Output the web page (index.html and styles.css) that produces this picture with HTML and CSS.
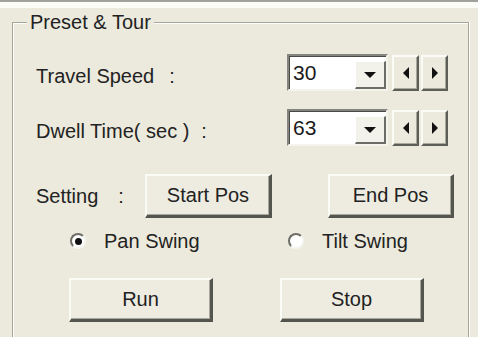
FILE: index.html
```html
<!DOCTYPE html>
<html>
<head>
<meta charset="utf-8">
<link rel="stylesheet" href="styles.css">
</head>
<body>
<div class="topbar"></div>
<fieldset class="group">
  <legend class="title">Preset &amp; Tour</legend>
  <div class="row r1">
    <span class="label lab-wide lab-shift">Travel Speed<span class="colon c1">:</span></span>
    <div class="combo"><span class="val">30</span><span class="drop"><i class="tri-down"></i></span></div>
    <span class="spin sp-l"><i class="tri-left"></i></span>
    <span class="spin"><i class="tri-right"></i></span>
  </div>
  <div class="row r2">
    <span class="label lab-wide lab-shift">Dwell Time( sec )<span class="colon c2">:</span></span>
    <div class="combo"><span class="val">63</span><span class="drop"><i class="tri-down"></i></span></div>
    <span class="spin sp-l"><i class="tri-left"></i></span>
    <span class="spin"><i class="tri-right"></i></span>
  </div>
  <div class="row r3">
    <span class="label lab-set">Setting<span class="colon c3">:</span></span>
    <span class="btn b-start">Start Pos</span>
    <span class="btn b-end">End Pos</span>
  </div>
  <div class="row r4">
    <span class="radio r-pan"><span class="circle on"></span><span class="rtext">Pan Swing</span></span>
    <span class="radio"><span class="circle"></span><span class="rtext">Tilt Swing</span></span>
  </div>
  <div class="row r5">
    <span class="btn b-run">Run</span>
    <span class="btn b-stop">Stop</span>
  </div>
</fieldset>
</body>
</html>
```

FILE: styles.css
```css
html, body {
  margin: 0;
  padding: 0;
  width: 478px;
  height: 337px;
  overflow: hidden;
  background: #ECEADD;
  font-family: "Liberation Sans", Arial, sans-serif;
  font-size: 20px;
  color: #222;
}

.topbar {
  height: 6px;
  border-top: 2px solid #a2a29c;
  background: #fbfbf8;
}

.group {
  box-sizing: border-box;
  margin: 3px 0 0 12px;
  padding: 0 0 0 14px;
  width: 457px;
  height: 326px;
  min-inline-size: 0;
  border: 1px solid #a6a59a;
  border-bottom-width: 0;
  box-shadow: inset 1px 1px #fdfdfa, 1px 0 #fdfdfa;
}

.title {
  padding: 0 3px;
  line-height: 22px;
  background: #ECEADD;
}

.row {
  display: flex;
  align-items: center;
  padding-left: 9px;
}

.r1 { margin-top: 21px; height: 37px; }
.r2 { margin-top: 18px; height: 37px; }
.r3 { margin-top: 28px; height: 44px; }
.r4 { margin-top: 5px; height: 36px; }
.r5 { margin-top: 19px; height: 44px; }

.label {
  line-height: 22px;
  white-space: nowrap;
}
.lab-wide { width: 251px; }
.lab-shift { padding-top: 6px; }
.lab-set { width: 109px; }

.colon { margin-left: 15px; }
.c2 { margin-left: 12px; }
.c3 { margin-left: 20px; }

.combo {
  box-sizing: border-box;
  width: 101px;
  height: 37px;
  display: flex;
  align-items: stretch;
  background: #fff;
  border: 2px solid;
  border-color: #858580 #f4f3ec #f4f3ec #858580;
  box-shadow: inset 1px 1px #4a4a46;
}

.val {
  flex: 1;
  padding: 0 0 0 4px;
  line-height: 33px;
  font-size: 21px;
  color: #1a1a1a;
}

.drop {
  box-sizing: border-box;
  width: 31px;
  margin: 5px 0 0 0;
  display: flex;
  align-items: center;
  justify-content: center;
  background: #f3f2ea;
  border-top: 1px solid #fff;
  border-left: 1px solid #fff;
  border-right: 2px solid #6c6c66;
  border-bottom: 2px solid #6c6c66;
}

.tri-down {
  width: 0;
  height: 0;
  border-left: 6px solid transparent;
  border-right: 6px solid transparent;
  border-top: 6px solid #111;
}

.spin {
  box-sizing: border-box;
  width: 27px;
  height: 36px;
  display: flex;
  align-items: center;
  justify-content: center;
  background: #ECEADD;
  border-top: 2px solid #fbfbf6;
  border-left: 2px solid #fbfbf6;
  border-right: 2px solid #5e5e58;
  border-bottom: 2px solid #5e5e58;
  box-shadow: inset -1px -1px #a9a89d;
}
.sp-l { margin: 0 2px 0 4px; }

.tri-left {
  width: 0;
  height: 0;
  border-top: 6px solid transparent;
  border-bottom: 6px solid transparent;
  border-right: 6px solid #111;
}
.tri-right {
  width: 0;
  height: 0;
  border-top: 6px solid transparent;
  border-bottom: 6px solid transparent;
  border-left: 6px solid #111;
}

.btn {
  box-sizing: border-box;
  height: 44px;
  display: flex;
  align-items: center;
  justify-content: center;
  background: #EEECE1;
  border-top: 2px solid #fbfbf6;
  border-left: 2px solid #fbfbf6;
  border-right: 3px solid #55554f;
  border-bottom: 3px solid #55554f;
  box-shadow: inset -1px -1px #a9a89d;
  white-space: nowrap;
}
.b-start { width: 127px; }
.b-end { width: 126px; margin-left: 56px; }
.b-run { width: 144px; margin-left: 33px; }
.b-stop { width: 144px; margin-left: 67px; }

.radio {
  display: flex;
  align-items: center;
}
.r-pan { width: 218px; margin-left: 34px; }

.circle {
  box-sizing: border-box;
  width: 16px;
  height: 16px;
  border-radius: 50%;
  background: #fff;
  border: 2px solid;
  border-color: #6e6e69 #f6f6f2 #f6f6f2 #6e6e69;
  display: flex;
  align-items: center;
  justify-content: center;
}
.circle.on::after {
  content: "";
  width: 7px;
  height: 7px;
  border-radius: 50%;
  background: #111;
}

.rtext {
  margin-left: 18px;
  line-height: 22px;
}
```
